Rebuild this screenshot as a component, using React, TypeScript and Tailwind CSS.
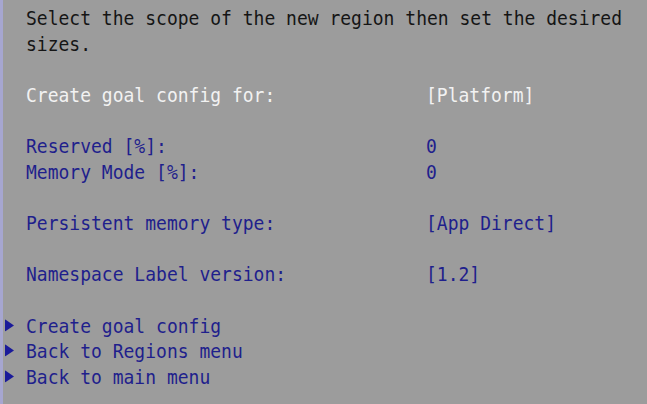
import React from "react";

type Row =
  | { kind: "blank" }
  | { kind: "text"; text: string; tone: "black" | "white" }
  | { kind: "field"; label: string; value: string; tone: "white" | "blue" }
  | { kind: "link"; text: string };

const rows: Row[] = [
  { kind: "text", text: "Select the scope of the new region then set the desired", tone: "black" },
  { kind: "text", text: "sizes.", tone: "black" },
  { kind: "blank" },
  { kind: "field", label: "Create goal config for:", value: "[Platform]", tone: "white" },
  { kind: "blank" },
  { kind: "field", label: "Reserved [%]:", value: "0", tone: "blue" },
  { kind: "field", label: "Memory Mode [%]:", value: "0", tone: "blue" },
  { kind: "blank" },
  { kind: "field", label: "Persistent memory type:", value: "[App Direct]", tone: "blue" },
  { kind: "blank" },
  { kind: "field", label: "Namespace Label version:", value: "[1.2]", tone: "blue" },
  { kind: "blank" },
  { kind: "link", text: "Create goal config" },
  { kind: "link", text: "Back to Regions menu" },
  { kind: "link", text: "Back to main menu" },
];

const toneClass = {
  black: "text-[#151515]",
  white: "text-[#f2f2f2]",
  blue: "text-[#1f1f8c]",
};

function Arrow() {
  return (
    <svg width="9" height="11" viewBox="0 0 9 11" className="shrink-0">
      <path d="M0 0 L9 5.5 L0 11 Z" fill="#1a1a9a" />
    </svg>
  );
}

export default function App() {
  return (
    <div className="flex h-[404px] w-[647px] overflow-hidden bg-[#9c9c9c]">
      <div className="w-[3px] shrink-0 bg-[#a6a6d0]" />
      <div
        className="flex-1 pt-[5px] text-[18px] leading-[25.64px]"
        style={{ fontFamily: '"DejaVu Sans Mono", "Liberation Mono", monospace' }}
      >
        {rows.map((row, i) => {
          if (row.kind === "blank") return <div key={i} className="h-[25.64px]" />;
          if (row.kind === "text")
            return (
              <div key={i} className={`scale-y-[1.12] pl-[23px] whitespace-pre ${toneClass[row.tone]}`}>
                {row.text}
              </div>
            );
          if (row.kind === "field")
            return (
              <div key={i} className={`flex scale-y-[1.12] pl-[23px] whitespace-pre ${toneClass[row.tone]}`}>
                <span className="w-[400px] shrink-0">{row.label}</span>
                <span>{row.value}</span>
              </div>
            );
          return (
            <div key={i} className="flex scale-y-[1.12] items-center whitespace-pre text-[#1f1f8c]">
              <span className="ml-[2px] flex w-[21px] items-center">
                <Arrow />
              </span>
              <span>{row.text}</span>
            </div>
          );
        })}
      </div>
    </div>
  );
}
